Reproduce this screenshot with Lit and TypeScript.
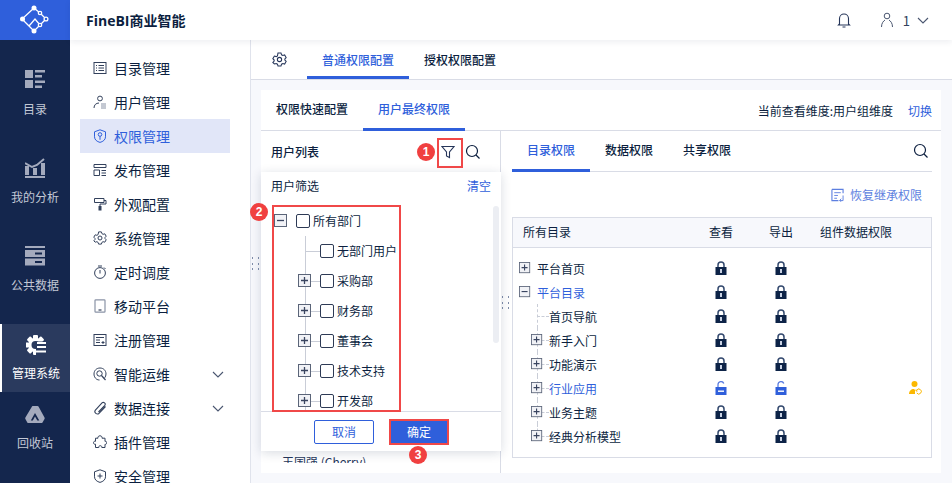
import { LitElement, html, css, svg } from "lit";
import { customElement } from "lit/decorators.js";

const gearPath = "M5.600 .9h2.800l.5 1.700 1.200.7 1.700-.5 1.400 2.400-1.200 1.300v1l1.200 1.300-1.400 2.400-1.700-.5-1.200.7-.5 1.700H5.600l-.5-1.700-1.200-.7-1.700.5L.8 9.800 2 8.500v-1L.8 6.200l1.400-2.400 1.700.5 1.200-.7z";
const menuIcons: Record<string, unknown> = {
  dir: svg`<rect x="1" y="1.500" width="12" height="11" fill="none" stroke="currentColor"/><path d="M3 4.500h1M3 7h1M3 9.500h1M5.500 4.500h5.500M5.500 7h5.500M5.500 9.500h5.500" stroke="currentColor"/>`,
  user: svg`<circle cx="7" cy="3.500" r="2.400" fill="none" stroke="currentColor"/><path d="M1 13c0-3 2-5 5-5" fill="none" stroke="currentColor"/><path d="M8 9h5M8 11h5M8 13h5" stroke="#8a93a6"/>`,
  shield: svg`<path d="M7 .8l5.500 2v5c0 3-2.500 4.800-5.500 5.600C4 12.600 1.500 10.800 1.500 7.800v-5z" fill="none" stroke="currentColor"/><circle cx="7" cy="5.500" r="1.800" fill="none" stroke="currentColor"/><path d="M7 7.300v3.500" stroke="currentColor"/>`,
  publish: svg`<path d="M1 1.500h12v3H1zM1 7h5.500v5.500H1z" fill="none" stroke="currentColor"/><path d="M8.500 7.500H13M8.500 10H13M8.500 12.500H13" stroke="currentColor"/>`,
  look: svg`<path d="M1.500 1.500h9.500v4H1.500z" fill="none" stroke="currentColor"/><path d="M11 3.500h2v3.500H7v2" fill="none" stroke="currentColor"/><rect x="5.500" y="9" width="3" height="4.500" fill="currentColor"/>`,
  gear: svg`<path d=${gearPath} fill="none" stroke="currentColor"/><circle cx="7" cy="7" r="2" fill="none" stroke="currentColor"/>`,
  timer: svg`<circle cx="7" cy="8" r="5.400" fill="none" stroke="currentColor"/><path d="M5 1h4M7 5v3.500M11 2.500l1.500 1.500" stroke="currentColor" fill="none"/>`,
  phone: svg`<rect x="2" y=".8" width="10" height="12.400" rx=".8" fill="none" stroke="#8a93a6" stroke-width="1.200"/><path d="M5.500 11h3" stroke="currentColor" stroke-width="1.200"/>`,
  reg: svg`<rect x="1" y="1.500" width="12" height="11" fill="none" stroke="currentColor"/><path d="M3 4.500h8M3 7h4M3 9.500h4M8.500 9.500h3M10 8v3" stroke="currentColor"/>`,
  restore: svg`<path d="M1 1h12v4M1 1v12h7" fill="none" stroke="currentColor" stroke-width="1.200"/><path d="M3.500 4.500h7M3.500 7.500h4M3.500 10.500h3" stroke="currentColor"/><path d="M13 7.500v5.500H9.500M11 11l-1.800 2 1.800 1" fill="none" stroke="currentColor"/>`,
  ops: svg`<path d="M6.500 13C3 13 1 10 1 7c0-3.500 2.500-6 6-6s6 2.500 6 6c0 1.500-.5 2.800-1.300 3.800" fill="none" stroke="currentColor"/><circle cx="6.500" cy="6.500" r="2.700" fill="none" stroke="currentColor"/><path d="M8.500 8.500l4 4.500" stroke="currentColor" stroke-width="1.200"/>`,
  clip: svg`<path d="M12.500 5.500L6 12.300c-1.700 1.800-5.500-.6-3.600-3.200L9 1.900c1.600-1.500 4.200.5 2.800 2.400L5.500 11" fill="none" stroke="currentColor" stroke-width="1.100"/>`,
  plugin: svg`<path d="M5 3.200C4.600 1.800 5.600.8 7 .8s2.400 1 2 2.400h3v3.200c1.200-.3 1.700.4 1.700 1.400s-.7 1.800-1.700 1.500v3.200H8.800c.2-1.200-.5-1.800-1.500-1.800s-1.800.7-1.500 1.800H2.500V9.200C1.200 9.600.5 8.700.5 7.700s.8-1.800 2-1.400V3.200z" fill="none" stroke="currentColor"/>`,
  safe: svg`<path d="M7 .8l5.500 2v5c0 3-2.500 4.800-5.500 5.600C4 12.600 1.500 10.800 1.500 7.800v-5z" fill="none" stroke="currentColor"/><path d="M7 4.500v5M4.500 7h5" stroke="currentColor"/>`,
};

const railIcons: Record<string, unknown> = {
  dir: svg`<g fill="#a4aabd"><rect x="0" y="0" width="8" height="8"/><rect x="0" y="10" width="8" height="8"/><rect x="10" y="0" width="10" height="2.500"/><rect x="10" y="5" width="7" height="2.500"/><rect x="10" y="10.500" width="10" height="2.500"/><rect x="10" y="15.500" width="7" height="2.500"/></g>`,
  chart: svg`<g fill="#a4aabd"><rect x="0" y="8" width="4" height="9"/><rect x="8" y="10" width="4" height="7"/><rect x="16" y="5" width="4" height="12"/><rect x="0" y="18" width="20" height="2"/></g><path d="M0 5l7 4 5-2 7-6" fill="none" stroke="#a4aabd" stroke-width="2"/>`,
  data: svg`<g fill="#a4aabd"><rect x="0" y="0" width="20" height="2"/><rect x="0" y="4" width="20" height="7"/><rect x="0" y="12.500" width="20" height="7"/></g><path d="M10 7.500h7M10 16h7" stroke="#14264d" stroke-width="2"/>`,
  admin: svg`<g fill="#fff"><rect x="7" y="0" width="5" height="20" rx="1"/><rect x="7" y="0" width="5" height="20" rx="1" transform="rotate(45 9.500 10)"/><rect x="7" y="0" width="5" height="20" rx="1" transform="rotate(90 9.500 10)"/><rect x="7" y="0" width="5" height="20" rx="1" transform="rotate(135 9.500 10)"/></g><circle cx="9.500" cy="10" r="5.500" fill="none" stroke="#fff" stroke-width="3"/><circle cx="9.500" cy="10" r="4" fill="#2a3a5e"/><rect x="10" y="6.500" width="11" height="14" fill="#2a3a5e"/><path d="M11 8h9M11 12h9M8 16.500h12" stroke="#fff" stroke-width="2"/>`,
  trash: svg`<path d="M7 1.500c.3-.4.700-.5 1-.5h4.500c.4 0 .8.200 1 .5l6 11c.3.500.3.900 0 1.400l-2 3.500c-.3.400-.6.600-1 .6H3.300c-.4 0-.8-.2-1-.6L.4 14c-.3-.500-.3-.900 0-1.400z" fill="#a4aabd"/><path d="M10 8l-4.200 7.500 2 0L10 11.500l2.300 4h2z" fill="#14264d"/>`,
};

const rail = [
  { key: "dir", label: "目录" },
  { key: "chart", label: "我的分析" },
  { key: "data", label: "公共数据" },
  { key: "admin", label: "管理系统", active: true },
  { key: "trash", label: "回收站" },
];
const menu = [
  ["dir", "目录管理"], ["user", "用户管理"], ["shield", "权限管理", 1], ["publish", "发布管理"],
  ["look", "外观配置"], ["gear", "系统管理"], ["timer", "定时调度"], ["phone", "移动平台"],
  ["reg", "注册管理"], ["ops", "智能运维", 0, 1], ["clip", "数据连接", 0, 1], ["plugin", "插件管理"], ["safe", "安全管理"],
] as [string, string, number?, number?][];
const tree = [
  { label: "所有部门", level: 0, exp: "minus" },
  { label: "无部门用户", level: 1, exp: "" },
  { label: "采购部", level: 1, exp: "plus" },
  { label: "财务部", level: 1, exp: "plus" },
  { label: "董事会", level: 1, exp: "plus" },
  { label: "技术支持", level: 1, exp: "plus" },
  { label: "开发部", level: 1, exp: "plus" },
];
const perms = [
  { label: "平台首页", level: 0, exp: "plus" },
  { label: "平台目录", level: 0, exp: "minus", blue: true },
  { label: "首页导航", level: 1, exp: "" },
  { label: "新手入门", level: 1, exp: "plus" },
  { label: "功能演示", level: 1, exp: "plus" },
  { label: "行业应用", level: 1, exp: "plus", blue: true, open: true },
  { label: "业务主题", level: 1, exp: "plus" },
  { label: "经典分析模型", level: 1, exp: "plus", end: true },
];

const chevron = html`<svg width="12" height="7" viewBox="0 0 12 7"><path d="M1 1l5 5 5-5" fill="none" stroke="#4a5670" stroke-width="1.100"/></svg>`;
const search = html`<svg width="16" height="16" viewBox="0 0 16 16"><circle cx="7" cy="7" r="5.500" fill="none" stroke="#0c1f3f" stroke-width="1.200"/><path d="M11 11l3.500 3.500" stroke="#0c1f3f" stroke-width="1.200"/></svg>`;
const lock = html`<svg class="lock" width="12" height="14" viewBox="0 0 12 14"><path d="M3 7V4a3 3 0 0 1 6 0v3" fill="none" stroke="#33496e" stroke-width="1.500"/><rect x=".5" y="6" width="11" height="8" fill="#0d2347"/><rect x="5" y="8" width="2" height="4" fill="#c9d2e4"/></svg>`;
const unlock = html`<svg class="lock" width="12" height="14" viewBox="0 0 12 14"><path d="M3 6V3.500a3 3 0 0 1 5.800-1" fill="none" stroke="#5b7de0" stroke-width="1.300"/><rect x=".5" y="6" width="11" height="8" fill="#2f5fdb"/><rect x="3" y="9.500" width="6" height="1.400" fill="#fff"/></svg>`;
const expander = (kind: string) =>
  html`<svg class="exp" viewBox="0 0 14 14"><rect x=".5" y=".5" width="12" height="12" fill="#f1f2f6" stroke="#5a6478"/>${kind === "plus"
    ? svg`<path d="M3 6.500h7M6.500 3v7" stroke="#3a4560" stroke-width="1.300"/>`
    : svg`<path d="M3 6.500h7" stroke="#3a4560" stroke-width="1.300"/>`}</svg>`;

@customElement("app-root")
export class AppRoot extends LitElement {
  static styles = css`
    :host { display: block; width: 952px; height: 483px; overflow: hidden; font-family: "Noto Sans CJK SC", "Liberation Sans", sans-serif; font-size: 12px; color: #0c1f3f; }
    * { box-sizing: border-box; }
    .app { display: flex; width: 952px; height: 483px; background: #fff; }
    .rail { width: 70px; flex: none; background: #14264d; display: flex; flex-direction: column; }
    .logo { height: 40px; background: #2f5fdb; display: flex; align-items: center; justify-content: center; }
    .rail-list { display: flex; flex-direction: column; gap: 20px; padding-top: 20px; }
    .rail-item { height: 68px; display: flex; flex-direction: column; align-items: center; padding-top: 10px; color: #c3c8d5; gap: 11px; line-height: 16px; }
    .rail-item svg { height: 20px; width: 20px; flex: none; }
    .rail-item.active { background: #2a3a5e; border-left: 2px solid #fff; color: #fff; padding-top: 11px; gap: 10px; margin-bottom: -18px; }
    .rail-item.last { padding-top: 11px; gap: 10px; }
    .main { flex: 1; min-width: 0; display: flex; flex-direction: column; }
    .top { height: 40px; flex: none; display: flex; align-items: center; padding: 0 23px 0 16px; background: #fff; box-shadow: 0 2px 6px rgba(20, 38, 77, .08); position: relative; z-index: 2; }
    .brand { font-size: 14px; font-weight: 700; font-family: "Open Sans", "Noto Sans CJK SC", sans-serif; flex: 1; }
    .top-r { display: flex; align-items: center; }
    .top-r .num { margin: 0 7px 0 9px; font-size: 13px; color: #33415c; }
    .bell { margin-right: 29px; }
    .body { flex: 1; display: flex; min-height: 0; }
    .menu { width: 180px; flex: none; padding: 11px 20px 0 10px; overflow: hidden; }
    .mi { height: 34px; display: flex; align-items: center; font-size: 14px; padding-left: 13px; flex: none; color: #0c1f3f; }
    .mi svg.ic { width: 14px; height: 14px; margin-right: 7px; color: #33415c; flex: none; }
    .mi.on { background: #e1e6f8; color: #2f5fdb; }
    .mi.on svg.ic { color: #2f5fdb; }
    .mi .sp { flex: 1; }
    .mi .chev { margin-right: 6px; display: flex; }
    .content { flex: 1; min-width: 0; background: #f7f8fc; border-left: 1px solid #e0e3ec; display: flex; flex-direction: column; position: relative; }
    .tabs1 { height: 40px; background: #fff; border-bottom: 1px solid #d9dce6; display: flex; padding-left: 21px; flex: none; }
    .gearbtn { width: 35px; display: flex; align-items: center; color: #26365a; }
    .tab { padding: 0 15px; height: 100%; display: flex; align-items: center; font-weight: 500; border-bottom: 3px solid transparent; padding-top: 2px; }
    .tab.on { color: #2f5fdb; border-bottom-color: #2f5fdb; }
    .panel { flex: 1; margin: 10px 11px 10px 10px; background: #fff; display: flex; flex-direction: column; min-height: 0; }
    .phead { height: 41px; flex: none; display: flex; border-bottom: 1px solid #d9dce6; align-items: stretch; }
    .phead .tab { height: 41px; margin-bottom: -1px; padding-top: 0; padding-bottom: 1px; }
    .phead .sp { flex: 1; }
    .view { align-self: center; margin-right: 9px; display: flex; gap: 15px; }
    .blue { color: #2f5fdb; }
    .pbody { flex: 1; display: flex; min-height: 0; }
    .left { width: 240px; flex: none; position: relative; border-right: 1px solid #d9dce6; }
    .lhead { height: 41px; display: flex; align-items: center; padding: 0 19px 0 10px; font-weight: 500; }
    .lhead .sp { flex: 1; }
    .lhead .filter { margin-right: 10px; display: flex; }
    .lhead .srch { display: flex; }
    .ulist { margin: 283px 0 0 21px; height: 8px; overflow: hidden; line-height: 14px; color: #26365a; font-size: 12px; }
    .pop { position: absolute; left: 0; top: 41px; width: 240px; height: 279px; background: #fff; box-shadow: 0 2px 10px rgba(20, 38, 77, .16); display: flex; flex-direction: column; z-index: 3; }
    .pop-h { height: 34px; flex: none; display: flex; justify-content: space-between; align-items: center; padding: 0 10px 8px; }
    .tree { flex: 1; min-height: 0; overflow: hidden; position: relative; }
    .row { height: 30px; display: flex; align-items: center; position: relative; }
    .row .exp { flex: none; width: 14px; height: 14px; margin-right: 7px; position: relative; z-index: 1; }
    .row .noexp { width: 14px; margin-right: 7px; flex: none; }
    .row.l1::before { content: ""; position: absolute; left: 43.500px; top: 0; bottom: 0; border-left: 1px solid #c9cdd7; }
    .row.l1::after { content: ""; position: absolute; left: 44px; top: 15px; width: 15px; border-top: 1px solid #c9cdd7; }
    .cb { width: 14px; height: 14px; border: 1px solid #2d3a55; border-radius: 2px; background: #fff; margin-right: 3px; margin-left: 1px; flex: none; position: relative; z-index: 1; }
    .row .lab { line-height: 16px; }
    .scroll { position: absolute; right: 2px; top: 0; width: 6px; height: 137px; background: #eceef3; border-radius: 3px; }
    .pop-f { height: 40px; flex: none; border-top: 1px solid #d9dce6; display: flex; justify-content: center; align-items: center; gap: 15px; padding-left: 1px; }
    .btn { width: 60px; height: 24px; border-radius: 2px; border: 1px solid #2f5fdb; display: flex; align-items: center; justify-content: center; color: #2f5fdb; background: #fff; }
    .btn.pri { background: #2f5fdb; color: #fff; }
    .mark { position: absolute; border: 2px solid #f04848; pointer-events: none; z-index: 5; }
    .badge { position: absolute; width: 18px; height: 18px; border-radius: 50%; background: #f04040; color: #fff; font: 700 12px/18px "Liberation Sans", sans-serif; text-align: center; z-index: 6; }
    .right { flex: 1; min-width: 0; padding: 0 9px 0 11px; display: flex; flex-direction: column; }
    .rtabs { height: 41px; flex: none; display: flex; border-bottom: 1px solid #d9dce6; align-items: stretch; }
    .rtabs .tab { height: 41px; margin-bottom: -1px; padding-top: 0; padding-bottom: 1px; }
    .rtabs .sp { flex: 1; }
    .rtabs .srch { align-self: center; margin-right: 3px; display: flex; }
    .restore { height: 45px; flex: none; display: flex; align-items: center; justify-content: flex-end; color: #5d7fe0; padding-right: 10px; gap: 6px; }
    .table { height: 241px; flex: none; border: 1px solid #d9dce6; }
    .thead, .tr { display: grid; grid-template-columns: 178px 60px 60px 1fr; align-items: center; }
    .thead { height: 30px; background: #f7f8fc; border-bottom: 1px solid #d9dce6; padding-bottom: 2px; }
    .thead > div:first-child { padding-left: 10px; }
    .thead .c { text-align: center; }
    .thead .w { padding-left: 9px; }
    .tbody { padding-top: 8px; }
    .tr { height: 24px; }
    .name { display: flex; align-items: center; position: relative; height: 24px; }
    .name .exp { flex: none; width: 12px; height: 12px; position: relative; z-index: 1; }
    .name .noexp { flex: none; width: 12px; }
    .name .lab { margin-left: 6px; }
    .name.l0 { padding-left: 6px; }
    .name.l1 { padding-left: 18px; }
    .name.l1::before { content: ""; position: absolute; left: 23.500px; top: 0; bottom: 0; border-left: 1px dashed #c9cdd7; }
    .name.l1::after { content: ""; position: absolute; left: 24px; top: 12px; width: 12px; border-top: 1px dashed #c9cdd7; }
    .name.end::before { bottom: 12px; }
    .name.blue { color: #2f5fdb; }
    .cell { display: flex; justify-content: center; }
    .lock { display: block; }
    .warn { display: flex; justify-content: flex-end; padding-right: 9px; }
    .drag { position: absolute; width: 8px; height: 14px; display: grid; grid-template-columns: 2px 2px; gap: 3px 4px; z-index: 1; }
    .drag i { width: 1px; height: 2px; background: #7f8dab; }
  `;

  private drag(left: number, top: number) {
    return html`<div class="drag" style="left:${left}px;top:${top}px">${[1, 2, 3, 4, 5, 6].map(() => html`<i></i>`)}</div>`;
  }

  render() {
    return html`<div class="app">
      <aside class="rail">
        <div class="logo">
          <svg width="30" height="30" viewBox="0 0 30 30"><g fill="none" stroke="#fff" stroke-width="1.300"><path d="M14 3L2 14l12 12M14 3l6 5M9 21l6-7 5 6M20 8l6 6-6 6-6 6"/><circle cx="20" cy="8" r="1.700" fill="#2f5fdb"/><circle cx="20" cy="20" r="1.700" fill="#2f5fdb"/><circle cx="26" cy="14" r="1.900" fill="#2f5fdb"/></g><g fill="#fff"><circle cx="14" cy="3" r="2.500"/><circle cx="2.500" cy="14" r="2.500"/><circle cx="14" cy="26" r="2.500"/></g></svg>
        </div>
        <div class="rail-list">
          ${rail.map((r, i) => html`<div class="rail-item ${r.active ? "active" : ""} ${i === 4 ? "last" : ""}">
            <svg viewBox="0 0 20 20">${railIcons[r.key]}</svg><span>${r.label}</span></div>`)}
        </div>
      </aside>
      <div class="main">
        <header class="top">
          <div class="brand">FineBI商业智能</div>
          <div class="top-r">
            <svg class="bell" width="14" height="16" viewBox="0 0 14 16"><path d="M2.500 12V6.500a4.500 4.500 0 0 1 9 0V12l1 1h-11zM5.500 15h3" fill="none" stroke="#26365a" stroke-width="1.100"/></svg>
            <svg width="14" height="16" viewBox="0 0 14 16"><circle cx="7" cy="4" r="2.800" fill="none" stroke="#4a5670"/><path d="M1.500 15c0-4 2-6 3.500-7M12.500 15c0-4-2-6-3.500-7" fill="none" stroke="#4a5670"/></svg>
            <span class="num">1</span>${chevron}
          </div>
        </header>
        <div class="body">
          <nav class="menu">
            ${menu.map(([k, t, on, ch]) => html`<div class="mi ${on ? "on" : ""}"><svg class="ic" viewBox="0 0 14 14">${menuIcons[k]}</svg><span>${t}</span>${ch ? html`<span class="sp"></span><span class="chev">${chevron}</span>` : ""}</div>`)}
          </nav>
          <section class="content">
            <div class="tabs1">
              <div class="gearbtn"><svg width="15" height="15" viewBox="0 0 14 14">${menuIcons.gear}</svg></div>
              <div class="tab on">普通权限配置</div><div class="tab">授权权限配置</div>
            </div>
            <div class="panel">
              <div class="phead">
                <div class="tab">权限快速配置</div><div class="tab on">用户最终权限</div>
                <span class="sp"></span>
                <div class="view"><span>当前查看维度:用户组维度</span><span class="blue">切换</span></div>
              </div>
              <div class="pbody">
                <div class="left">
                  <div class="lhead"><span>用户列表</span><span class="sp"></span>
                    <span class="filter"><svg width="14" height="14" viewBox="0 0 14 14"><path d="M1 1.500h12L8.500 7v5.500L5.500 11V7z" fill="none" stroke="#26365a" stroke-width="1.100"/></svg></span>
                    <span class="srch">${search}</span></div>
                  <div class="ulist">王国强 (Cherry)</div>
                  <div class="pop">
                    <div class="pop-h"><span>用户筛选</span><span class="blue">清空</span></div>
                    <div class="tree">
                      ${tree.map((t) => html`<div class="row l${t.level}" style="padding-left:${13 + t.level * 24}px">
                        ${t.exp ? expander(t.exp) : html`<span class="noexp"></span>`}<span class="cb"></span><span class="lab">${t.label}</span></div>`)}
                      <div class="scroll"></div>
                    </div>
                    <div class="pop-f"><div class="btn">取消</div><div class="btn pri">确定</div></div>
                  </div>
                  <div class="mark" style="left:176px;top:7px;width:26px;height:30px"></div>
                  <div class="mark" style="left:11px;top:74px;width:129px;height:207px"></div>
                  <div class="mark" style="left:128px;top:288px;width:60px;height:26px"></div>
                  <div class="badge" style="left:156px;top:12px">1</div>
                  <div class="badge" style="left:-11px;top:72px">2</div>
                  <div class="badge" style="left:148px;top:315px">3</div>
                  ${this.drag(241, 165)}
                </div>
                <div class="right">
                  <div class="rtabs"><div class="tab on">目录权限</div><div class="tab">数据权限</div><div class="tab">共享权限</div><span class="sp"></span><span class="srch">${search}</span></div>
                  <div class="restore">
                    <svg width="13" height="14" viewBox="0 0 14 14">${menuIcons.restore}</svg><span>恢复继承权限</span>
                  </div>
                  <div class="table">
                    <div class="thead"><div>所有目录</div><div class="c">查看</div><div class="c">导出</div><div class="w">组件数据权限</div></div>
                    <div class="tbody">
                      ${perms.map((p) => html`<div class="tr">
                        <div class="name l${p.level} ${p.blue ? "blue" : ""} ${p.end ? "end" : ""}">${p.exp ? expander(p.exp) : html`<span class="noexp"></span>`}<span class="lab">${p.label}</span></div>
                        <div class="cell">${p.open ? unlock : lock}</div>
                        <div class="cell">${p.open ? unlock : lock}</div>
                        <div class="warn">${p.open ? html`<svg width="13" height="14" viewBox="0 0 13 14"><circle cx="5.500" cy="3" r="3" fill="#fbb800"/><path d="M0 13c0-3 2-5 5-5l1 1v4z" fill="#fbb800"/><path d="M7.500 9.500a2.500 2.500 0 1 1 .3 2.500M7 8.500v1.500h1.500" fill="none" stroke="#fbb800" stroke-width="1"/></svg>` : ""}</div>
                      </div>`)}
                    </div>
                  </div>
                </div>
              </div>
            </div>
            ${this.drag(1, 217)}
          </section>
        </div>
      </div>
    </div>`;
  }
}
